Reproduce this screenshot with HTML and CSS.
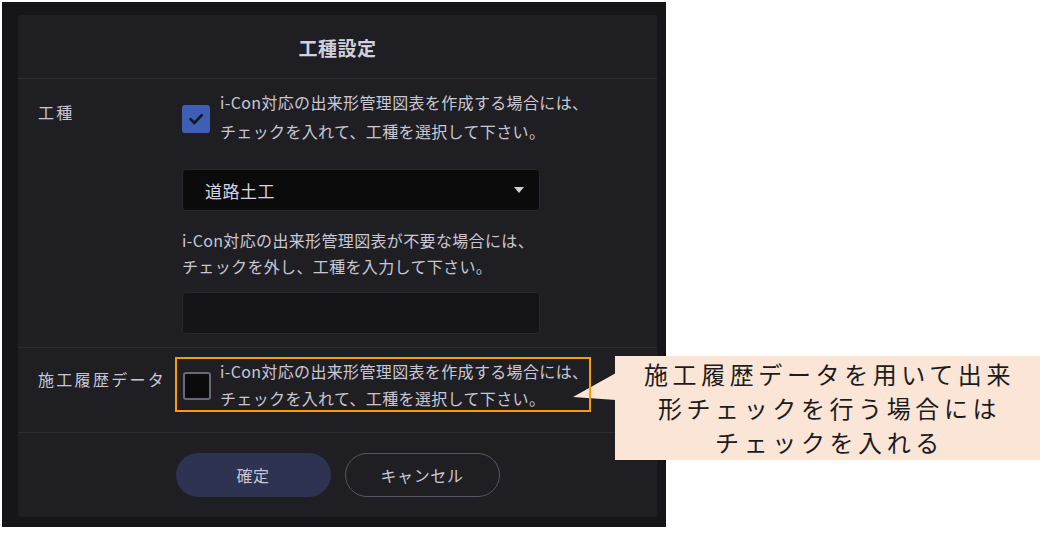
FILE: index.html
```html
<!DOCTYPE html>
<html lang="ja">
<head>
<meta charset="utf-8">
<title>工種設定</title>
<link rel="stylesheet" href="styles.css">
</head>
<body>
<div class="page">
  <div class="frame">
    <div class="dialog">
      <div class="header"><h1 class="title">工種設定</h1></div>

      <div class="row row-kind">
        <div class="label label-kind">工種</div>
        <div class="field">
          <div class="check-line">
            <span class="checkbox checked">
              <svg viewBox="0 0 28 28" width="28" height="28"><path d="M8.5 14.2 L12.3 18 L19.8 10.2" fill="none" stroke="#121628" stroke-width="2.6" stroke-linecap="round" stroke-linejoin="round"/></svg>
            </span>
            <p class="desc">i-Con対応の出来形管理図表を作成する場合には、<br>チェックを入れて、工種を選択して下さい。</p>
          </div>
          <div class="select">
            <span class="select-value">道路土工</span>
            <span class="caret"></span>
          </div>
          <p class="help">i-Con対応の出来形管理図表が不要な場合には、<br>チェックを外し、工種を入力して下さい。</p>
          <div class="input"></div>
        </div>
      </div>

      <div class="row row-history">
        <div class="label label-history">施工履歴データ</div>
        <div class="field">
          <div class="check-line check-line-2">
            <span class="checkbox unchecked"></span>
            <p class="desc desc-2">i-Con対応の出来形管理図表を作成する場合には、<br>チェックを入れて、工種を選択して下さい。</p>
          </div>
        </div>
      </div>

      <div class="footer">
        <button class="btn btn-primary">確定</button>
        <button class="btn btn-outline">キャンセル</button>
      </div>
    </div>
  </div>

  <svg class="pointer" viewBox="0 0 46 32" width="46" height="32"><polygon points="46,3 3,27 46,30" fill="#fbe5d6"/></svg>
  <div class="highlight"></div>
  <div class="callout">施工履歴データを用いて出来<br>形チェックを行う場合には<br>チェックを入れる</div>
</div>
</body>
</html>
```

FILE: styles.css
```css
* { box-sizing: border-box; }
html, body { margin: 0; padding: 0; background: #ffffff; }
body { font-family: "Noto Sans CJK JP", "Noto Sans", sans-serif; }

.page { position: relative; width: 1046px; height: 534px; overflow: hidden; }

.frame {
  margin: 2px 0 0 2px;
  width: 664px;
  height: 525px;
  background: #161618;
  padding: 13px 9px 10px 16px;
}

.dialog {
  width: 639px;
  height: 502px;
  background: #1f1f23;
  border-radius: 4px;
  display: flex;
  flex-direction: column;
  color: #c9c7d5;
}

.header {
  height: 64px;
  display: flex;
  align-items: center;
  justify-content: center;
  border-bottom: 1px solid #2d2d33;
  padding-top: 2px;
}
.title { margin: 0; font-size: 19px; font-weight: 700; letter-spacing: 0.5px; color: #d2d0de; }

.row {
  display: grid;
  grid-template-columns: 164px 358px;
  border-bottom: 1px solid #2d2d33;
}
.row-kind { padding: 9px 0 13px; }
.row-history { padding: 10px 0 20px; }

.label { padding-left: 20px; font-size: 16px; letter-spacing: 2.3px; white-space: nowrap; }
.label-kind { line-height: 29px; padding-top: 10px; }
.label-history { line-height: 27px; padding-top: 8px; }

.check-line { display: flex; align-items: center; gap: 10px; }
.check-line-2 { padding-left: 1px; gap: 9px; }

.checkbox {
  flex: none;
  width: 28px;
  height: 28px;
  border-radius: 3px;
  display: block;
  margin-top: 3px;
}
.checkbox svg { display: block; }
.checked { background: #3e5fb4; }
.unchecked { background: #0b0b0d; border: 2px solid #696878; margin-top: 1px; }

.desc {
  margin: 0;
  font-size: 16px;
  letter-spacing: 0.35px;
  line-height: 29px;
  white-space: nowrap;
}
.desc-2 { line-height: 27px; }

.select {
  margin-top: 23px;
  height: 42px;
  background: #0b0b0c;
  border: 1px solid #27272c;
  border-radius: 4px;
  display: flex;
  align-items: center;
  justify-content: space-between;
  padding: 0 15px 0 22px;
}
.select-value { font-size: 17px; letter-spacing: 0.5px; color: #d6d4e0; }
.caret {
  width: 0; height: 0;
  border-left: 5px solid transparent;
  border-right: 5px solid transparent;
  border-top: 6px solid #cfcfd4;
}

.help { margin: 16px 0 0; font-size: 16px; letter-spacing: 0.35px; line-height: 26px; white-space: nowrap; }

.input {
  margin-top: 13px;
  height: 42px;
  background: #141417;
  border: 1px solid #27272c;
  border-radius: 4px;
}

.footer {
  display: flex;
  justify-content: center;
  gap: 14px;
  padding-top: 20px;
}
.btn {
  width: 155px;
  height: 44px;
  border-radius: 22px;
  font-family: inherit;
  font-size: 16px;
  color: #c9c7d5;
  letter-spacing: 0.6px;
}
.btn-primary { background: #2d3350; border: none; }
.btn-outline { background: transparent; border: 1px solid #555468; }

.highlight {
  position: absolute;
  left: 175px;
  top: 357px;
  width: 416px;
  height: 55px;
  border: 2px solid #f99c00;
}

.pointer { position: absolute; left: 570px; top: 370px; display: block; }

.callout {
  position: absolute;
  left: 615px;
  top: 356px;
  width: 425px;
  height: 104px;
  background: #fbe5d6;
  color: #1c1c1c;
  font-size: 24px;
  line-height: 34px;
  letter-spacing: 4.6px;
  text-align: center;
  padding: 1px 0 0 4px;
}
```
